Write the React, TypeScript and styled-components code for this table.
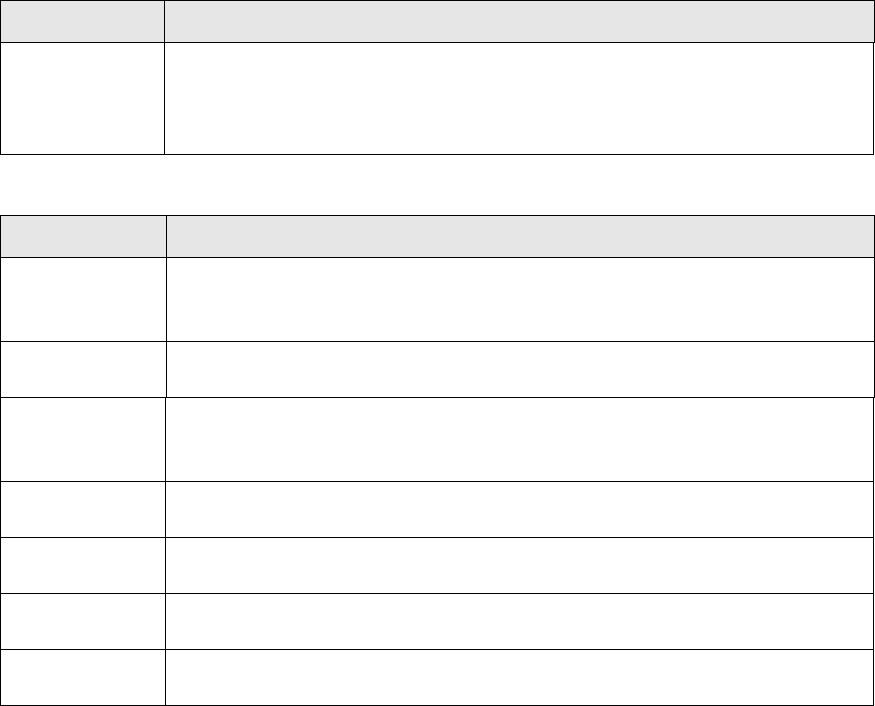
import styled, { createGlobalStyle } from 'styled-components';

const Global = createGlobalStyle`
  html, body {
    margin: 0;
    padding: 0;
    background: #ffffff;
    font-family: "Liberation Sans", Arial, sans-serif;
    font-size: 13px;
    color: #000;
  }
  *, *::before, *::after { box-sizing: border-box; }
`;

const Page = styled.div`
  display: flex;
  flex-direction: column;
  gap: 60px;
  width: 875px;
`;

const Table = styled.div`
  display: flex;
  flex-direction: column;
`;

// one grid block of a table; the first column width and the total width vary
const Block = styled.div<{ $first: number; $width: number; $top?: boolean }>`
  display: grid;
  grid-template-columns: ${p => p.$first}px 1fr;
  width: ${p => p.$width}px;
  border-left: 1px solid #000;
  border-top: ${p => (p.$top ? '1px solid #000' : 'none')};
`;

const Cell = styled.div<{ $h: number; $head?: boolean }>`
  height: ${p => p.$h}px;
  border-right: 1px solid #000;
  border-bottom: 1px solid #000;
  background: ${p => (p.$head ? '#e6e6e6' : '#ffffff')};
  padding: 4px 6px;
  font-weight: ${p => (p.$head ? 700 : 400)};
`;

function Row({ h, head }: { h: number; head?: boolean }) {
  return (
    <>
      <Cell $h={h} $head={head} />
      <Cell $h={h} $head={head} />
    </>
  );
}

export default function App() {
  return (
    <>
      <Global />
      <Page>
        <Table>
          <Block $first={164} $width={875} $top>
            <Row h={42} head />
          </Block>
          <Block $first={164} $width={874}>
            <Row h={112} />
          </Block>
        </Table>

        <Table>
          <Block $first={166} $width={875} $top>
            <Row h={42} head />
            <Row h={84} />
            <Row h={56} />
          </Block>
          <Block $first={165} $width={874}>
            {[84, 56, 56, 56, 56].map((h, i) => (
              <Row key={i} h={h} />
            ))}
          </Block>
        </Table>
      </Page>
    </>
  );
}
